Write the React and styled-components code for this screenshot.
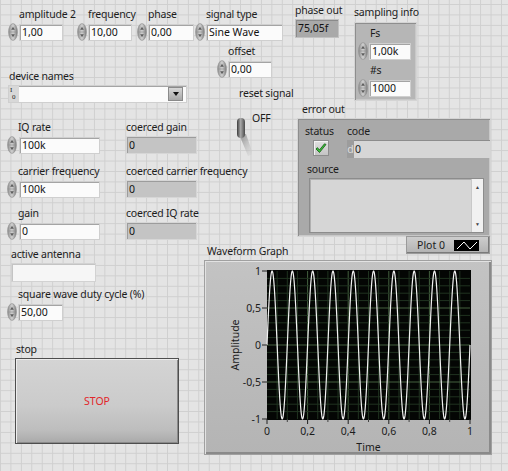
import React from "react";
import styled, { createGlobalStyle } from "styled-components";

const GlobalStyle = createGlobalStyle`
  html, body { margin: 0; padding: 0; }
  body {
    width: 508px;
    height: 471px;
    overflow: hidden;
    font-family: "Noto Sans", "Open Sans", sans-serif;
  }
`;

// front panel canvas: every object sits where it was dropped on the panel
const Panel = styled.div`
  position: relative;
  width: 508px;
  height: 471px;
  overflow: hidden;
  background-color: #e4e4e4;
  background-image:
    linear-gradient(to right, #cfcfcf 1px, transparent 1px),
    linear-gradient(to bottom, #cfcfcf 1px, transparent 1px);
  background-size: 10.45px 10.45px;
  background-position: 0 4px;
  font-size: 10.5px;
  color: #1c1c1c;
`;

const Node = styled.div`
  position: absolute;
  left: ${(p) => p.$x}px;
  top: ${(p) => p.$y}px;
  display: flex;
  flex-direction: column;
  align-items: flex-start;
`;

const Label = styled.div`
  font-size: 10.5px;
  letter-spacing: -0.2px;
  line-height: 13px;
  margin: ${(p) => p.$top || 0}px 0 ${(p) => p.$gap ?? 2}px ${(p) => p.$indent || 0}px;
  white-space: nowrap;
  color: #1c1c1c;
`;

const Row = styled.div`
  display: flex;
  align-items: center;
  gap: ${(p) => p.$gap ?? 1}px;
`;

const Field = styled.div`
  box-sizing: border-box;
  width: ${(p) => p.$w}px;
  height: ${(p) => p.$h || 17}px;
  padding-left: 2px;
  line-height: ${(p) => (p.$h || 17) - 2}px;
  font-size: 10.5px;
  white-space: nowrap;
  overflow: hidden;
  color: #111;
  background: ${(p) => p.$bg || "#fbfbfb"};
  border: 1px solid ${(p) => p.$edge || "#cfcfcf"};
  box-shadow: inset 1px 1px 0 ${(p) => p.$shade || "#a4a4a4"};
`;

const SpinSvg = styled.svg`
  display: block;
  flex: none;
`;

const Spinner = () => (
  <SpinSvg width="10" height="18" viewBox="0 0 10 18">
    <defs>
      <linearGradient id="spinGrad" x1="0" x2="1" y1="0" y2="0">
        <stop offset="0" stopColor="#8e8e8e" />
        <stop offset="0.5" stopColor="#d2d2d2" />
        <stop offset="1" stopColor="#7c7c7c" />
      </linearGradient>
    </defs>
    <ellipse cx="5" cy="9" rx="4.4" ry="8.4" fill="url(#spinGrad)" stroke="#8a8a8a" strokeWidth="0.6" />
    <line x1="1" y1="9" x2="9" y2="9" stroke="#8f8f8f" strokeWidth="0.6" />
    <path d="M3.2 6.8 L5 3.8 L6.8 6.8Z" fill="#5c5c5c" />
    <path d="M3.2 11.2 L5 14.2 L6.8 11.2Z" fill="#5c5c5c" />
  </SpinSvg>
);

const Numeric = ({ x, y, label, value, width, indent = 11, gap = 1 }) => (
  <Node $x={x} $y={y}>
    <Label $indent={indent}>{label}</Label>
    <Row $gap={gap}>
      <Spinner />
      <Field $w={width}>{value}</Field>
    </Row>
  </Node>
);

const Indicator = ({ x, y, label, value, width, dark }) => (
  <Node $x={x} $y={y}>
    <Label>{label}</Label>
    <Field
      $w={width}
      $h={dark ? 19 : 18}
      $bg={dark ? "#a9a9a9" : "#c4c4c4"}
      $edge={dark ? "#c2c2c2" : "#d6d6d6"}
      $shade={dark ? "#8a8a8a" : "#9c9c9c"}
    >
      {value}
    </Field>
  </Node>
);

/* ---------- clusters ---------- */

const Cluster = styled.div`
  box-sizing: border-box;
  width: ${(p) => p.$w}px;
  height: ${(p) => p.$h}px;
  background: ${(p) => p.$bg};
  border: 1px solid #d4d4d4;
  box-shadow: inset 1px 1px 0 #8e8e8e, inset -1px -1px 0 #c8c8c8;
  display: flex;
  flex-direction: column;
  align-items: flex-start;
  overflow: hidden;
`;

const SamplingBody = styled.div`
  display: flex;
  flex-direction: column;
  align-items: flex-start;
  padding: 4px 0 0 3px;
`;

const ErrTop = styled.div`
  display: flex;
  width: 100%;
  padding-top: 6px;
`;

const StatusCol = styled.div`
  width: 42px;
  padding-left: 7px;
  display: flex;
  flex-direction: column;
  align-items: flex-start;
`;

const CodeCol = styled.div`
  flex: 1;
  display: flex;
  flex-direction: column;
  align-items: flex-start;
`;

const LedBox = styled.div`
  width: 16px;
  height: 16px;
  margin: 1px 0 0 8px;
  box-sizing: border-box;
  background: linear-gradient(#e0e0e0, #c4c4c4);
  border: 1px solid #8c8c8c;
  box-shadow: inset 1px 1px 0 #f2f2f2;
  display: flex;
  align-items: center;
  justify-content: center;
`;

const CodeField = styled.div`
  box-sizing: border-box;
  width: 100%;
  height: 18px;
  margin-top: 1px;
  display: flex;
  align-items: stretch;
  background: #d6d6d6;
  box-shadow: inset 1px 1px 0 #8c8c8c;
  font-size: 10.5px;
  line-height: 18px;
`;

const Radix = styled.span`
  width: 7px;
  background: #9c9c9c;
  color: #dcdcdc;
  text-align: center;
  margin-right: 1px;
`;

const SourceBox = styled.div`
  box-sizing: border-box;
  width: 175px;
  height: 55px;
  margin-left: 11px;
  background: #d6d6d6;
  border: 1px solid #8c8c8c;
  box-shadow: inset 1px 1px 0 #b0b0b0;
  display: flex;
  justify-content: flex-end;
`;

const ScrollBar = styled.div`
  width: 11px;
  background: #f1f1f1;
  border-left: 1px solid #c8c8c8;
  display: flex;
  flex-direction: column;
  justify-content: space-between;
  align-items: center;
  padding: 5px 0;
  font-size: 5px;
  color: #444;
  line-height: 6px;
`;

/* ---------- misc controls ---------- */

const RingBox = styled.div`
  box-sizing: border-box;
  width: 179px;
  height: 18px;
  background: #fbfbfb;
  border: 1px solid #cfcfcf;
  box-shadow: inset 1px 1px 0 #a4a4a4;
  display: flex;
  align-items: center;
  justify-content: space-between;
`;

const IOGlyph = styled.div`
  width: 10px;
  height: 16px;
  background: #d8d8d8;
  display: flex;
  flex-direction: column;
  justify-content: space-between;
  font-family: "Liberation Serif", serif;
  font-size: 7px;
  line-height: 7px;
  color: #222;
`;

const IOTop = styled.span`
  padding-left: 1px;
  padding-top: 1px;
`;

const IOBottom = styled.span`
  padding-left: 3px;
  padding-bottom: 1px;
`;

const DropButton = styled.div`
  width: 13px;
  height: 12px;
  margin-right: 3px;
  background: linear-gradient(#d6d6d6, #a8a8a8);
  border: 1px solid #8a8a8a;
  display: flex;
  align-items: center;
  justify-content: center;
`;

const DownTri = styled.div`
  width: 0;
  height: 0;
  border-left: 3px solid transparent;
  border-right: 3px solid transparent;
  border-top: 4px solid #111;
`;

const StringBox = styled.div`
  box-sizing: border-box;
  width: 85px;
  height: 19px;
  background: #f6f6f6;
  border: 1px solid #d2d2d2;
  box-shadow: inset 1px 1px 0 #c4c4c4;
`;

const StopButton = styled.div`
  box-sizing: border-box;
  width: 164px;
  height: 86px;
  border: 1px solid #4e4e4e;
  background: linear-gradient(
    180deg,
    #d4d4d4 0%,
    #cbcbcb 55%,
    #bdbdbd 85%,
    #a9a9a9 100%
  );
  box-shadow: inset 1px 1px 0 #ededed, inset -1px -1px 0 #8a8a8a;
  display: flex;
  align-items: center;
  justify-content: center;
  color: #e2262a;
  font-size: 10.5px;
`;

const ToggleRow = styled.div`
  display: flex;
  align-items: flex-start;
`;

const Toggle = () => (
  <svg width="22" height="44" viewBox="0 0 22 44">
    <defs>
      <linearGradient id="lever" x1="0" x2="1">
        <stop offset="0" stopColor="#3c3c3c" />
        <stop offset="0.45" stopColor="#a8a8a8" />
        <stop offset="1" stopColor="#4a4a4a" />
      </linearGradient>
      <linearGradient id="shadow" x1="0" y1="0" x2="1" y2="1">
        <stop offset="0" stopColor="#8a8a8a" />
        <stop offset="1" stopColor="#d8d8d8" stopOpacity="0.3" />
      </linearGradient>
    </defs>
    <path d="M9 22 L16 22 L23 42 L18 44 Z" fill="url(#shadow)" />
    <rect x="7" y="6" width="8" height="20" rx="4" fill="url(#lever)" />
  </svg>
);

/* ---------- graph ---------- */

const Legend = styled.div`
  box-sizing: border-box;
  width: 84px;
  height: 18px;
  display: flex;
  align-items: center;
  justify-content: flex-end;
  gap: 9px;
  padding-right: 10px;
  background: linear-gradient(#cdcdcd, #b2b2b2);
  border: 1px solid #9a9a9a;
  box-shadow: inset -1px -1px 0 #7a7a7a;
  font-size: 10.5px;
`;

const Swatch = styled.div`
  width: 25px;
  height: 11px;
  background: #000;
  display: flex;
`;

const GraphFrame = styled.div`
  box-sizing: border-box;
  width: 288px;
  height: 195px;
  background: linear-gradient(#c3c3c3, #b4b4b4);
  border: 1px solid #a0a0a0;
  box-shadow: inset 1px 1px 0 #e2e2e2, inset -2px -2px 0 #8a8a8a;
`;

const PX = 62;
const PW = 203;
const PY = 10;
const PH = 148;

const sinePath = (() => {
  let d = "";
  const n = 900;
  for (let i = 0; i <= n; i++) {
    const t = i / n;
    const x = PX + t * PW;
    const y = PY + PH / 2 - (PH / 2) * Math.sin(2 * Math.PI * 10 * t);
    d += (i ? "L" : "M") + x.toFixed(2) + " " + y.toFixed(2);
  }
  return d;
})();

const yTicks = [
  [1, "1"],
  [0.5, "0,5"],
  [0, "0"],
  [-0.5, "-0,5"],
  [-1, "-1"],
];
const xTicks = ["0", "0,2", "0,4", "0,6", "0,8", "1"];

const Graph = () => (
  <GraphFrame>
    <svg width="288" height="195" viewBox="0 0 288 195" fontFamily="Noto Sans, sans-serif" fontSize="10.5">
      <rect x={PX} y={PY - 1} width={PW + 1} height={PH + 2} fill="#040604" />
      {Array.from({ length: 19 }, (_, i) => {
        const k = i + 1;
        const x = PX + (k * PW) / 20;
        return (
          <line key={"v" + k} x1={x} x2={x} y1={PY} y2={PY + PH}
            stroke={k % 4 === 0 ? "#44603f" : "#203320"} strokeWidth="1" />
        );
      })}
      {Array.from({ length: 19 }, (_, i) => {
        const k = i + 1;
        const y = PY + (k * PH) / 20;
        return (
          <line key={"h" + k} x1={PX} x2={PX + PW} y1={y} y2={y}
            stroke={k % 5 === 0 ? "#44603f" : "#203320"} strokeWidth="1" />
        );
      })}
      <path d={sinePath} fill="none" stroke="#f2f2f2" strokeWidth="1.2" />
      {yTicks.map(([v, t]) => {
        const y = PY + ((1 - v) / 2) * PH;
        return (
          <g key={t}>
            <line x1={PX - 5} x2={PX} y1={y} y2={y} stroke="#222" />
            <text x={PX - 6} y={y + 4} textAnchor="end" fill="#1c1c1c">{t}</text>
          </g>
        );
      })}
      {xTicks.map((t, i) => {
        const x = PX + (i * PW) / 5;
        return (
          <g key={t}>
            <line x1={x} x2={x} y1={PY + PH} y2={PY + PH + 5} stroke="#222" />
            <text x={x} y={174} textAnchor="middle" fill="#1c1c1c">{t}</text>
          </g>
        );
      })}
      {Array.from({ length: 5 }, (_, i) => {
        const x = PX + ((i + 0.5) * PW) / 5;
        return <line key={"m" + i} x1={x} x2={x} y1={PY + PH} y2={PY + PH + 3} stroke="#444" />;
      })}
      <text x={PX + PW / 2} y={190} textAnchor="middle" fill="#1c1c1c">Time</text>
      <text transform={`translate(34 ${PY + PH / 2}) rotate(-90)`} textAnchor="middle" fill="#1c1c1c">
        Amplitude
      </text>
    </svg>
  </GraphFrame>
);

const Check = () => (
  <svg width="12" height="11" viewBox="0 0 12 11">
    <path d="M1 6 L4.5 9.5 L11 1.5 L9.5 0.8 L4.4 7 L2.4 4.6 Z" fill="#3bbf3b" stroke="#145a14" strokeWidth="0.8" />
  </svg>
);

export default function App() {
  return (
    <>
      <GlobalStyle />
      <Panel>
        <Numeric x={8} y={8} label="amplitude 2" value="1,00" width={44} />
        <Numeric x={77} y={8} label="frequency" value="10,00" width={44} />
        <Numeric x={137} y={8} label="phase" value="0,00" width={46} />
        <Numeric x={195} y={8} label="signal type" value="Sine Wave" width={77} />
        <Indicator x={295} y={4} label="phase out" value="75,05f" width={44} dark />

        <Node $x={354} $y={6}>
          <Label $gap={3}>sampling info</Label>
          <Cluster $w={63} $h={79} $bg="#b6b6b6">
            <SamplingBody>
              <Label $indent={12} $gap={2}>Fs</Label>
              <Row>
                <Spinner />
                <Field $w={42} $h={17}>1,00k</Field>
              </Row>
              <Label $indent={12} $gap={2} $top={4}>#s</Label>
              <Row>
                <Spinner />
                <Field $w={42} $h={17}>1000</Field>
              </Row>
            </SamplingBody>
          </Cluster>
        </Node>

        <Numeric x={217} y={45} label="offset" value="0,00" width={44} />

        <Node $x={8} $y={70}>
          <Label $indent={1}>device names</Label>
          <RingBox>
            <IOGlyph>
              <IOTop>I</IOTop>
              <IOBottom>0</IOBottom>
            </IOGlyph>
            <DropButton>
              <DownTri />
            </DropButton>
          </RingBox>
        </Node>

        <Node $x={239} $y={87}>
          <Label>reset signal</Label>
        </Node>
        <Node $x={230} $y={112}>
          <ToggleRow>
            <Toggle />
            <Label>OFF</Label>
          </ToggleRow>
        </Node>

        <Numeric x={7} y={121} label="IQ rate" value="100k" width={81} gap={2} />
        <Numeric x={7} y={165} label="carrier frequency" value="100k" width={81} gap={2} />
        <Numeric x={7} y={207} label="gain" value="0" width={81} gap={2} />

        <Indicator x={126} y={121} label="coerced gain" value="0" width={71} />
        <Indicator x={126} y={165} label="coerced carrier frequency" value="0" width={71} />
        <Indicator x={126} y={207} label="coerced IQ rate" value="0" width={71} />

        <Node $x={11} $y={248}>
          <Label>active antenna</Label>
          <StringBox />
        </Node>

        <Numeric x={7} y={288} label="square wave duty cycle (%)" value="50,00" width={45} />

        <Node $x={15} $y={343}>
          <Label $indent={1}>stop</Label>
          <StopButton>STOP</StopButton>
        </Node>

        <Node $x={297} $y={103}>
          <Label $indent={5}>error out</Label>
          <Cluster $w={194} $h={119} $bg="#a9a9a9">
            <ErrTop>
              <StatusCol>
                <Label $gap={1}>status</Label>
                <LedBox>
                  <Check />
                </LedBox>
              </StatusCol>
              <CodeCol>
                <Label $gap={1}>code</Label>
                <CodeField>
                  <Radix>d</Radix>0
                </CodeField>
              </CodeCol>
            </ErrTop>
            <Label $indent={9} $top={5}>source</Label>
            <SourceBox>
              <ScrollBar>
                <span>▲</span>
                <span>▼</span>
              </ScrollBar>
            </SourceBox>
          </Cluster>
        </Node>

        <Node $x={406} $y={236}>
          <Legend>
            Plot 0
            <Swatch>
              <svg width="25" height="11" viewBox="0 0 25 11">
                <polyline points="3,9 10,2 16,9 23,2" fill="none" stroke="#fff" strokeWidth="1" />
              </svg>
            </Swatch>
          </Legend>
        </Node>

        <Node $x={204} $y={245}>
          <Label $indent={3}>Waveform Graph</Label>
          <Graph />
        </Node>
      </Panel>
    </>
  );
}
